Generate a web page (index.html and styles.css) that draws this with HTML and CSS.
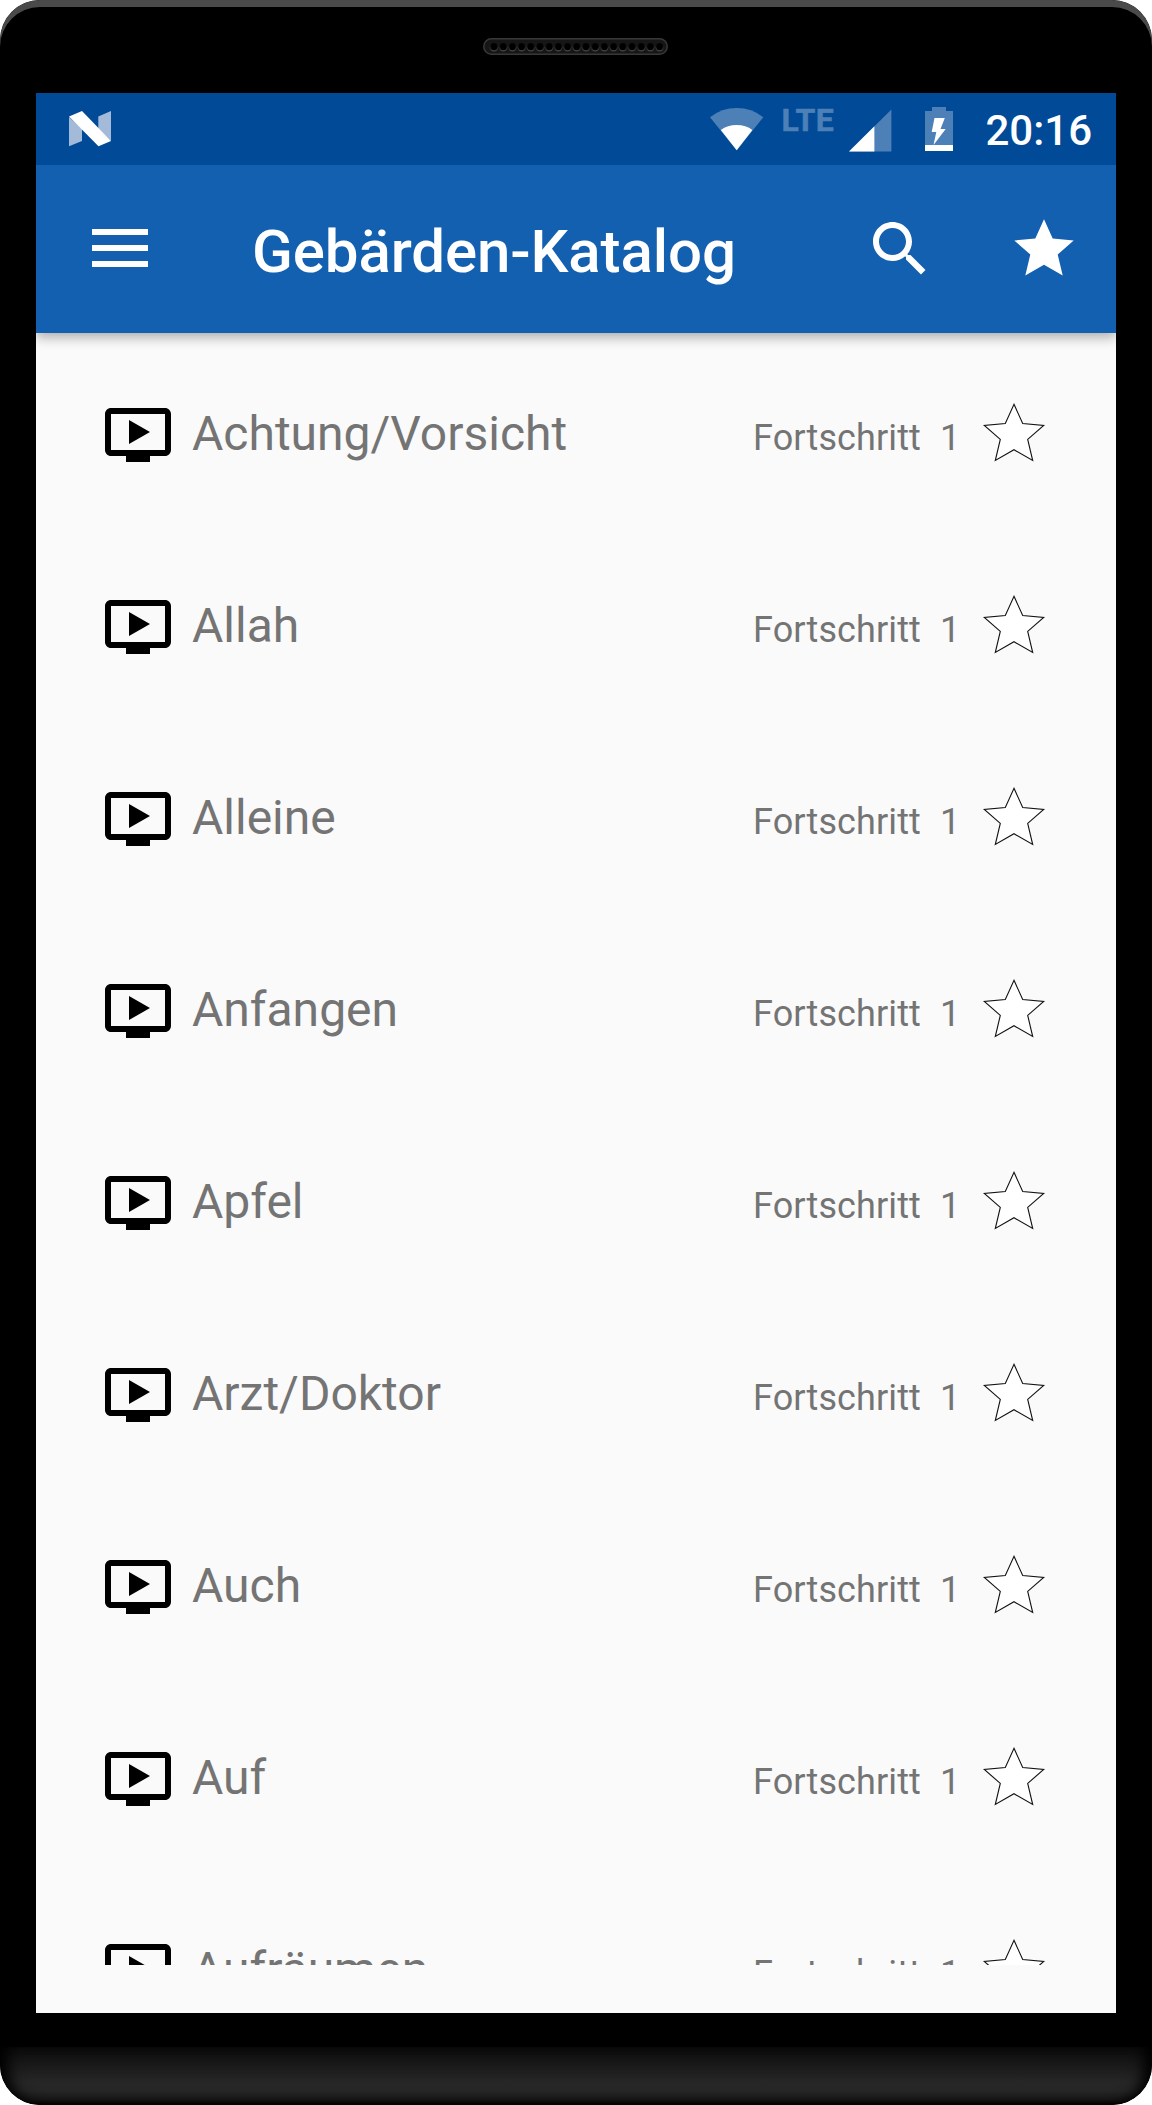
FILE: index.html
```html
<!DOCTYPE html>
<html lang="de">
<head>
<meta charset="utf-8">
<title>Gebärden-Katalog</title>
<link rel="stylesheet" href="styles.css">
</head>
<body>
<svg class="defs" width="0" height="0" aria-hidden="true">
  <symbol id="video" viewBox="0 0 24 24"><path d="M21 3H3c-1.11 0-2 .89-2 2v12c0 1.1.89 2 2 2h5v2h8v-2h5c1.1 0 1.99-.9 1.99-2L23 5c0-1.1-.9-2-2-2zm0 14H3V5h18v12zm-5-6l-7 4V7z"/></symbol>
  <symbol id="star" viewBox="0 0 64 60"><path d="M32 2.3 40.7 21.6 61.7 23.5 45.7 37.4 50.7 58.5 32 47.7 13.3 58.5 18.3 37.4 2.3 23.5 23.3 21.6Z"/></symbol>
  <pattern id="holes" width="9.2" height="17" patternUnits="userSpaceOnUse" x="6.4">
    <circle cx="4.6" cy="9.4" r="4" fill="#454545"/><circle cx="4.6" cy="8.6" r="3.6" fill="#000"/>
  </pattern>
</svg>
<div class="phone">
  <div class="top-bezel">
    <svg class="speaker" viewBox="0 0 185 17">
      <rect x=".75" y=".75" width="183.5" height="15.5" rx="7.75" fill="#161616" stroke="#383838" stroke-width="1.5"/>
      <rect x="6.4" y="0" width="174.8" height="17" fill="url(#holes)"/>
    </svg>
  </div>
  <main class="screen">
    <div class="status-bar">
      <svg class="logo-n" viewBox="0 0 42 36"><g fill="#a3bbd9"><path d="M0 6V35.3L13 30V18Z"/><path d="M29.3 5.5 42 0V30L29.3 18Z"/></g><path fill="#fff" d="M0 5.5 13 0 42 30 29.5 35.3Z"/></svg>
      <div class="indicators">
        <svg class="wifi" viewBox="0 0 54 44"><path class="dim" d="M0 10.3Q11.5 1 26.7 1T53.3 10.3L26.7 43.3Z"/><path fill="#fff" d="M10.8 23Q17.5 18 26.7 18T42.4 23L26.7 43.3Z"/></svg>
        <span class="lte">LTE</span>
        <svg class="signal" viewBox="0 0 43 43"><path class="dim" d="M0 42.6 42.4 .4V42.6Z"/><path fill="#fff" d="M0 42.6 25.4 17.3V42.6Z"/></svg>
        <svg class="battery" viewBox="0 0 28 44"><path class="dim" d="M0 4H7V0H21V4H28V38H0Z"/><path fill="#fff" d="M0 38H28V44H0ZM9.5 11H19.8L15.5 22H20.7L8.5 38 11.3 25H6.7Z"/></svg>
        <span class="time">20:16</span>
      </div>
    </div>
    <header class="app-bar">
      <svg class="menu" viewBox="0 0 56 38"><path d="M0 0H56V6H0ZM0 16H56V22H0ZM0 32H56V38H0Z"/></svg>
      <h1 class="title">Gebärden-Katalog</h1>
      <svg class="search" viewBox="0 0 24 24"><path d="M15.5 14h-.79l-.28-.27C15.41 12.59 16 11.11 16 9.5 16 5.91 13.09 3 9.5 3S3 5.91 3 9.5 5.91 16 9.5 16c1.61 0 3.09-.59 4.23-1.57l.27.28v.79l5 4.99L20.49 19l-4.99-5zm-6 0C7.01 14 5 11.99 5 9.5S7.01 5 9.5 5 14 7.01 14 9.5 11.99 14 9.5 14z"/></svg>
      <svg class="favorites"><use href="#star"/></svg>
    </header>
    <ul class="list">
      <li class="row"><svg class="video"><use href="#video"/></svg><span class="word">Achtung/Vorsicht</span><span class="progress">Fortschritt</span><span class="count">1</span><svg class="star"><use href="#star"/></svg></li>
      <li class="row"><svg class="video"><use href="#video"/></svg><span class="word">Allah</span><span class="progress">Fortschritt</span><span class="count">1</span><svg class="star"><use href="#star"/></svg></li>
      <li class="row"><svg class="video"><use href="#video"/></svg><span class="word">Alleine</span><span class="progress">Fortschritt</span><span class="count">1</span><svg class="star"><use href="#star"/></svg></li>
      <li class="row"><svg class="video"><use href="#video"/></svg><span class="word">Anfangen</span><span class="progress">Fortschritt</span><span class="count">1</span><svg class="star"><use href="#star"/></svg></li>
      <li class="row"><svg class="video"><use href="#video"/></svg><span class="word">Apfel</span><span class="progress">Fortschritt</span><span class="count">1</span><svg class="star"><use href="#star"/></svg></li>
      <li class="row"><svg class="video"><use href="#video"/></svg><span class="word">Arzt/Doktor</span><span class="progress">Fortschritt</span><span class="count">1</span><svg class="star"><use href="#star"/></svg></li>
      <li class="row"><svg class="video"><use href="#video"/></svg><span class="word">Auch</span><span class="progress">Fortschritt</span><span class="count">1</span><svg class="star"><use href="#star"/></svg></li>
      <li class="row"><svg class="video"><use href="#video"/></svg><span class="word">Auf</span><span class="progress">Fortschritt</span><span class="count">1</span><svg class="star"><use href="#star"/></svg></li>
      <li class="row"><svg class="video"><use href="#video"/></svg><span class="word">Aufräumen</span><span class="progress">Fortschritt</span><span class="count">1</span><svg class="star"><use href="#star"/></svg></li>
    </ul>
  </main>
  <div class="bottom-bezel"></div>
</div>
</body>
</html>
```

FILE: styles.css
```css
* { box-sizing: border-box; }
body { margin: 0; background: #fff; font-family: Roboto, "Liberation Sans", sans-serif; }
svg { display: block; flex: none; }
.defs { position: absolute; }

.phone {
  width: 1152px;
  height: 2105px;
  display: flex;
  flex-direction: column;
  background: #000;
  border-radius: 40px;
  overflow: hidden;
}
.top-bezel {
  height: 93px;
  flex: none;
  padding-top: 38px;
  border-radius: 40px 40px 0 0;
  box-shadow: inset 0 7px 0 #4a4a4a;
}
.speaker { width: 185px; height: 17px; margin-left: 483px; }
.bottom-bezel {
  height: 58px;
  margin-top: auto;
  border-radius: 0 0 40px 40px;
  background: linear-gradient(#0b0b0b, #262626 60%, #262626 75%, #181818 90%, #000);
  box-shadow: inset 16px 0 14px -8px #000, inset -16px 0 14px -8px #000;
}

.screen {
  width: 1080px;
  height: 1920px;
  margin: 0 36px;
  padding-bottom: 48px;
  display: flex;
  flex-direction: column;
  background: #fafafa;
}
.status-bar {
  height: 72px;
  flex: none;
  display: flex;
  justify-content: space-between;
  padding: 0 24px 0 33px;
  background: #004a98;
}
.dim { fill: #4d80b7; }
.logo-n { width: 42px; height: 36px; margin-top: 18px; }
.indicators { display: flex; align-items: flex-start; }
.wifi { width: 54px; height: 44px; margin-top: 14px; }
.lte {
  width: 53px;
  margin: 8px 0 0 17px;
  color: #4d80b7;
  font-size: 32px;
  font-weight: 700;
  line-height: 38px;
  letter-spacing: .4px;
  -webkit-text-stroke: .5px #4d80b7;
}
.signal { width: 43px; height: 43px; margin: 16px 0 0 15px; }
.battery { width: 28px; height: 44px; margin: 14px 0 0 33px; }
.time {
  margin: 13px 0 0 32px;
  color: #fff;
  font-size: 42px;
  font-weight: 500;
  line-height: 50px;
}

.app-bar {
  height: 168px;
  flex: none;
  display: flex;
  align-items: flex-start;
  padding: 0 40px 0 56px;
  background: #1460b0;
  fill: #fff;
  box-shadow: 0 4px 12px rgba(0, 0, 0, .33);
  clip-path: inset(0 0 -24px 0);
}
.menu { width: 56px; height: 38px; margin-top: 64px; }
.title {
  flex: 1;
  margin: 52px 0 0 104px;
  color: #fff;
  font-size: 60px;
  font-weight: 500;
  line-height: 70px;
  letter-spacing: -.1px;
}
.search { width: 72px; height: 72px; margin-top: 48px; }
.favorites { width: 64px; height: 60px; margin: 52px 0 0 76px; }

.list {
  flex: 1;
  min-height: 0;
  margin: 0;
  padding: 6px 0 0;
  overflow: hidden;
  list-style: none;
}
.row {
  height: 192px;
  display: flex;
  align-items: flex-start;
  padding: 0 70px 0 66px;
  color: #747474;
}
.video { width: 72px; height: 72px; margin-top: 60px; fill: #000; }
.word { flex: 1; margin: 67px 0 0 18px; font-size: 48px; line-height: 56px; }
.progress { width: 187px; margin-top: 78px; font-size: 36px; line-height: 42px; letter-spacing: .12px; }
.count { width: 42px; margin-top: 78px; font-size: 36px; line-height: 42px; }
.star { width: 64px; height: 60px; margin-top: 63px; fill: #fff; stroke: #111; stroke-width: 1.1; }
```
